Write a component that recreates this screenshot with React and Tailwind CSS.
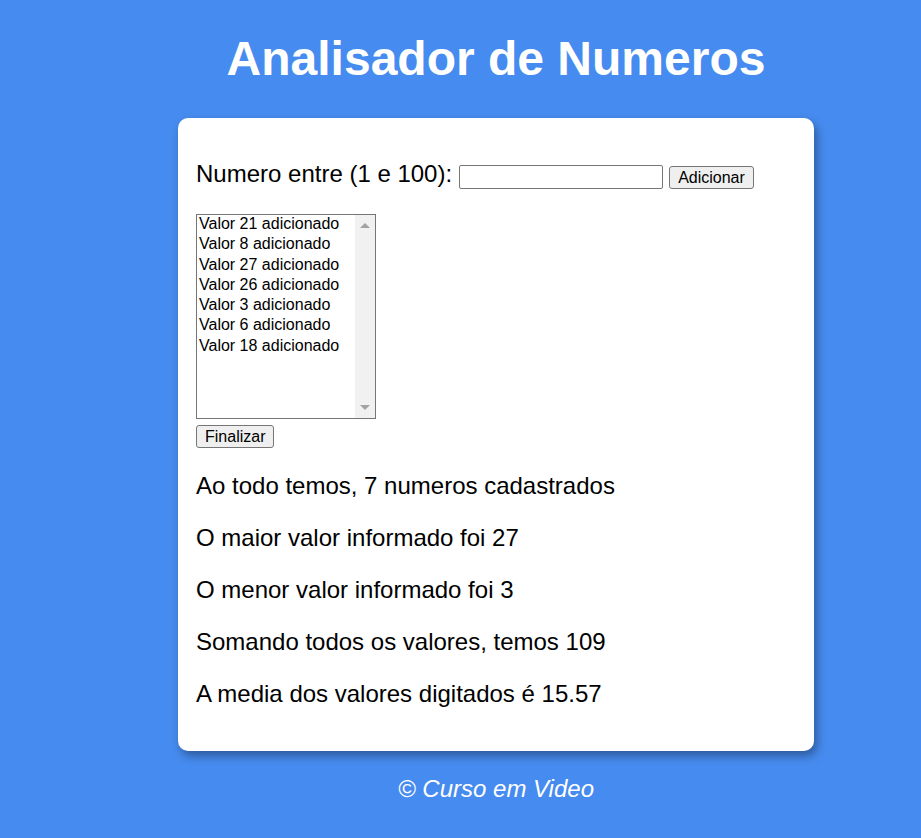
const VALUES = [21, 8, 27, 26, 3, 6, 18];

const BTN =
  'h-[23px] rounded-[3px] border border-[#767676] bg-[#efefef] px-[8px] text-[16px] leading-[19px] text-black';

function ListBox({ items }) {
  return (
    <div className="flex h-[205px] w-[180px] border border-[#767676] bg-white">
      <div className="flex-1">
        {items.map((v) => (
          <div key={v} className="h-[20.3px] px-[2px] text-[16px] leading-[17px] text-black">
            Valor {v} adicionado
          </div>
        ))}
      </div>
      <div className="flex w-[20px] flex-col items-center justify-between bg-[#f1f1f1] py-[8px]">
        <span className="h-0 w-0 border-x-[5px] border-b-[5px] border-x-transparent border-b-[#a3a3a3]" />
        <span className="h-0 w-0 border-x-[5px] border-t-[5px] border-x-transparent border-t-[#a3a3a3]" />
      </div>
    </div>
  );
}

export default function App() {
  const total = VALUES.length;
  const max = Math.max(...VALUES);
  const min = Math.min(...VALUES);
  const sum = VALUES.reduce((a, b) => a + b, 0);
  const avg = (sum / total).toFixed(2);

  const results = [
    `Ao todo temos, ${total} numeros cadastrados`,
    `O maior valor informado foi ${max}`,
    `O menor valor informado foi ${min}`,
    `Somando todos os valores, temos ${sum}`,
    `A media dos valores digitados é ${avg}`,
  ];

  return (
    <div
      className="min-h-screen bg-[#468bef] pb-[24px] pt-[31px]"
      style={{ fontFamily: '"Liberation Sans", Arial, sans-serif' }}
    >
      <div className="ml-[178px] w-[636px]">
        <h1 className="text-center text-[48px] font-bold leading-[55px] text-white">
          Analisador de Numeros
        </h1>

        <section className="mt-[32px] rounded-[10px] bg-white px-[18px] pb-[43px] pt-[42px] shadow-[3px_5px_10px_rgba(0,0,0,0.35)]">
          <div className="flex items-end">
            <span className="mb-[1px] text-[24px] leading-[28px] text-black">Numero entre (1 e 100):</span>
            <input
              type="text"
              className="ml-[7px] h-[24px] w-[204px] rounded-[2px] border border-[#767676] bg-white px-[2px] text-[16px] outline-none"
            />
            <button type="button" className={`ml-[6px] ${BTN}`}>
              Adicionar
            </button>
          </div>

          <div className="mt-[25px]">
            <ListBox items={VALUES} />
          </div>
          <button type="button" className={`mt-[6px] ${BTN}`}>
            Finalizar
          </button>

          <div className="mt-[23px] flex flex-col gap-[24px]">
            {results.map((r) => (
              <p key={r} className="text-[24px] leading-[28px] text-black">
                {r}
              </p>
            ))}
          </div>
        </section>

        <p className="mt-[24px] text-center text-[24px] italic leading-[28px] text-white">
          © Curso em Video
        </p>
      </div>
    </div>
  );
}
